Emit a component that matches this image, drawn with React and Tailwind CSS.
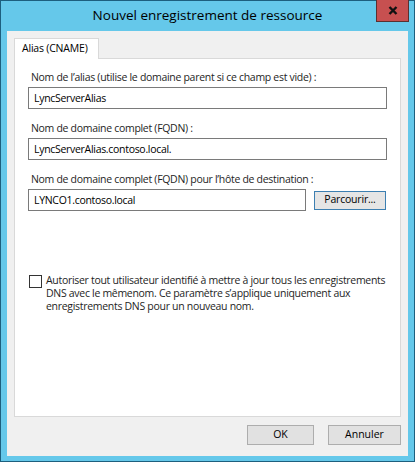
const font = { fontFamily: '"Segoe UI", "Open Sans", "Noto Sans", sans-serif' };

const Field = ({ label, value, children }) => (
  <div className="flex flex-col">
    <div className="h-4 leading-4 text-[10.5px] tracking-[-0.3px] text-[#1e1e1e] pl-[3px]">{label}</div>
    <div className="flex items-center gap-2 mt-[2px]">
      <div className="h-[22px] flex-1 border border-[#7a7a7a] bg-white px-[5px] text-[10.5px] tracking-[-0.3px] leading-5 text-black">
        {value}
      </div>
      {children}
    </div>
  </div>
);

export default function App() {
  return (
    <div
      className="w-[415px] h-[462px] border border-[#1d5f7e] bg-[#65c8ea] flex flex-col"
      style={font}
    >
      <div className="h-[30px] relative flex items-center justify-center shrink-0">
        <span className="text-[13.5px] text-black leading-none -mt-[1px]">
          Nouvel enregistrement de ressource
        </span>
        <div className="absolute right-[5px] -top-px w-[33px] h-[22px] bg-[#c75050] border border-[#5a3030] border-t-0 flex items-center justify-center">
          <svg width="10" height="9" viewBox="0 0 10 9">
            <path d="M1.5 1 L8.5 8 M8.5 1 L1.5 8" stroke="#111" strokeWidth="2.4" />
          </svg>
        </div>
      </div>

      <div className="flex-1 mx-[6px] mb-[5px] bg-[#f0f0f0] flex flex-col pt-[7px] pl-[7px] pr-[7px] pb-[11px]">
        <div className="flex">
          <div className="h-[21px] w-[85px] border border-[#d9d9d9] border-b-0 bg-white text-[10.5px] tracking-[-0.2px] text-black flex items-center pl-[7px] relative z-10 -mb-px">
            Alias (CNAME)
          </div>
        </div>
        <div className="h-[359px] border border-[#d9d9d9] bg-white px-[13px] pt-[10px] flex flex-col">
          <div className="flex flex-col gap-[11px]">
            <Field
              label="Nom de l’alias (utilise le domaine parent si ce champ est vide) :"
              value="LyncServerAlias"
            />
            <Field label="Nom de domaine complet (FQDN) :" value="LyncServerAlias.contoso.local." />
            <Field
              label="Nom de domaine complet (FQDN) pour l’hôte de destination :"
              value="LYNCO1.contoso.local"
            >
              <div className="w-[72px] h-[19px] mr-px border border-[#3c7fb1] bg-[#e5e5e5] text-[10.5px] tracking-[-0.2px] text-black flex items-center justify-center">
                Parcourir...
              </div>
            </Field>
          </div>
          <div className="flex gap-[4px] mt-[63px] pl-[1px]">
            <div className="w-[13px] h-[13px] border border-[#333] bg-white shrink-0 mt-[1px]" />
            <p className="text-[10.5px] tracking-[-0.3px] leading-[13px] text-[#1e1e1e]">
              Autoriser tout utilisateur identifié à mettre à jour tous les enregistrements DNS avec le
              mêmenom. Ce paramètre s’applique uniquement aux enregistrements DNS pour un nouveau nom.
            </p>
          </div>
        </div>
        <div className="flex justify-end gap-[14px] mt-auto">
          <div className="w-[67px] h-[20px] border border-[#adadad] bg-[#e1e1e1] text-[10.5px] text-black flex items-center justify-center">
            OK
          </div>
          <div className="w-[73px] h-[20px] border border-[#adadad] bg-[#e1e1e1] text-[10.5px] text-black flex items-center justify-center">
            Annuler
          </div>
        </div>
      </div>
    </div>
  );
}
